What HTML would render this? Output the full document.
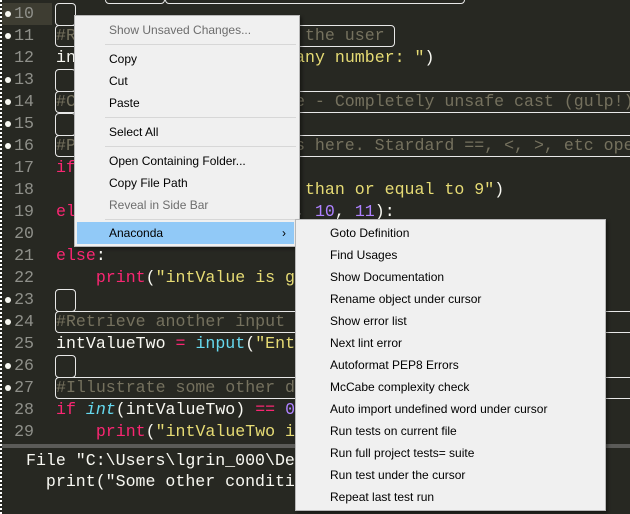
<!DOCTYPE html>
<html><head><meta charset="utf-8"><style>
*{margin:0;padding:0;box-sizing:border-box}
body{width:630px;height:514px;overflow:hidden;background:#272822;position:relative;font-family:"Liberation Mono",monospace}
.ln{position:absolute;left:0;width:34px;text-align:right;color:#8f908a;font-size:16.6px;line-height:22px;height:22px}
.dot{position:absolute;left:5px;width:6px;height:6px;border-radius:3px;background:#f8f8f2}
.code{position:absolute;left:56px;font-size:16.6px;line-height:22px;height:22px;color:#f8f8f2;white-space:pre;max-width:574px;overflow:hidden}
.c{color:#75715e}.s{color:#e6db74}.k{color:#f92672}.n{color:#ae81ff}.b{color:#66d9ef}.i{color:#66d9ef;font-style:italic}
.box{position:absolute;border:1px solid #e8e8e8;border-radius:4px}
.menu{position:absolute;background:#f0f0f0;border:1px solid #b8b8b8;font-family:"Liberation Sans",sans-serif;font-size:12px;color:#000;box-shadow:2px 2px 3px rgba(0,0,0,.4)}
.mi{position:absolute;left:0;right:0;height:22px;line-height:22px;white-space:nowrap}
.sep{position:absolute;left:30px;right:3px;height:1px;background:#d7d7d7}
.g{color:#6d6d6d}
</style></head><body>
<div style="position:absolute;left:0;top:0;width:2px;height:514px;border-left:2px dotted #fff"></div>
<div style="position:absolute;left:2px;top:3px;width:50px;height:22px;background:#3e3d32"></div>

<div class="ln" style="top:3px">10</div><div class="dot" style="top:11px"></div>
<div class="ln" style="top:25px">11</div><div class="dot" style="top:33px"></div>
<div class="ln" style="top:47px">12</div>
<div class="ln" style="top:69px">13</div><div class="dot" style="top:77px"></div>
<div class="ln" style="top:91px">14</div><div class="dot" style="top:99px"></div>
<div class="ln" style="top:113px">15</div><div class="dot" style="top:121px"></div>
<div class="ln" style="top:135px">16</div><div class="dot" style="top:143px"></div>
<div class="ln" style="top:157px">17</div>
<div class="ln" style="top:179px">18</div>
<div class="ln" style="top:201px">19</div>
<div class="ln" style="top:223px">20</div>
<div class="ln" style="top:245px">21</div>
<div class="ln" style="top:267px">22</div>
<div class="ln" style="top:289px">23</div><div class="dot" style="top:297px"></div>
<div class="ln" style="top:311px">24</div><div class="dot" style="top:319px"></div>
<div class="ln" style="top:333px">25</div>
<div class="ln" style="top:355px">26</div><div class="dot" style="top:363px"></div>
<div class="ln" style="top:377px">27</div><div class="dot" style="top:385px"></div>
<div class="ln" style="top:399px">28</div>
<div class="ln" style="top:421px">29</div>

<div class="box" style="left:105px;top:-6px;width:60px;height:10px"></div>
<div class="box" style="left:165px;top:-6px;width:300px;height:10px"></div>
<div class="box" style="left:55px;top:3px;width:21px;height:23px"></div>
<div class="box" style="left:55px;top:25px;width:340px;height:22px"></div>
<div class="box" style="left:55px;top:69px;width:21px;height:23px"></div>
<div class="box" style="left:55px;top:91px;width:575px;height:22px;border-right:none;border-radius:4px 0 0 4px"></div>
<div class="box" style="left:55px;top:113px;width:21px;height:23px"></div>
<div class="box" style="left:55px;top:135px;width:575px;height:22px;border-right:none;border-radius:4px 0 0 4px"></div>
<div class="box" style="left:55px;top:289px;width:21px;height:23px"></div>
<div class="box" style="left:55px;top:311px;width:575px;height:22px;border-right:none;border-radius:4px 0 0 4px"></div>
<div class="box" style="left:55px;top:355px;width:21px;height:23px"></div>
<div class="box" style="left:55px;top:377px;width:575px;height:22px;border-right:none;border-radius:4px 0 0 4px"></div>

<div class="code c" style="top:25px">#Request an integer from the user</div>
<div class="code" style="top:47px">intValue <span class="k">=</span> <span class="b">input</span>(<span class="s">"Enter any number: "</span>)</div>
<div class="code c" style="top:91px">#Convert this input value - Completely unsafe cast (gulp!)</div>
<div class="code c" style="top:135px">#Performs the comparisons here. Stardard ==, &lt;, &gt;, etc operators</div>
<div class="code" style="top:157px"><span class="k">if</span> <span class="i">int</span>(intValue) <span class="k">&lt;=</span> <span class="n">9</span>:</div>
<div class="code" style="top:179px">    <span class="k">print</span>(<span class="s">"intValue less than or equal to 9"</span>)</div>
<div class="code" style="top:201px"><span class="k">elif</span> <span class="i">int</span>(intValue) <span class="k">in</span> (<span class="n">9</span>, <span class="n">10</span>, <span class="n">11</span>):</div>
<div class="code" style="top:245px"><span class="k">else</span>:</div>
<div class="code" style="top:267px">    <span class="k">print</span>(<span class="s">"intValue is greater"</span>)</div>
<div class="code c" style="top:311px">#Retrieve another input from the user to compare and</div>
<div class="code" style="top:333px">intValueTwo <span class="k">=</span> <span class="b">input</span>(<span class="s">"Enter another"</span>)</div>
<div class="code c" style="top:377px">#Illustrate some other decision making here using and</div>
<div class="code" style="top:399px"><span class="k">if</span> <span class="i">int</span>(intValueTwo) <span class="k">==</span> <span class="n">0</span>:</div>
<div class="code" style="top:421px">    <span class="k">print</span>(<span class="s">"intValueTwo is zero"</span>)</div>

<div style="position:absolute;left:2px;top:444px;width:628px;height:4px;background:#5b5b58"></div>
<div class="code" style="left:26px;top:450px">File "C:\Users\lgrin_000\Desktop\test.py"</div>
<div class="code" style="left:26px;top:471px">  print("Some other condition")</div>

<div class="menu" style="left:74px;top:15px;width:226px;height:232px">
<div class="mi g" style="top:3px;padding-left:34px">Show Unsaved Changes...</div>
<div class="sep" style="top:28px"></div>
<div class="mi" style="top:32px;padding-left:34px">Copy</div>
<div class="mi" style="top:54px;padding-left:34px">Cut</div>
<div class="mi" style="top:76px;padding-left:34px">Paste</div>
<div class="sep" style="top:101px"></div>
<div class="mi" style="top:105px;padding-left:34px">Select All</div>
<div class="sep" style="top:130px"></div>
<div class="mi" style="top:134px;padding-left:34px">Open Containing Folder...</div>
<div class="mi" style="top:156px;padding-left:34px">Copy File Path</div>
<div class="mi g" style="top:178px;padding-left:34px">Reveal in Side Bar</div>
<div class="sep" style="top:203px"></div>
<div class="mi" style="top:206px;left:2px;right:5px;background:#91c9f7;padding-left:32px">Anaconda<span style="position:absolute;right:8px">›</span></div>
</div>

<div class="menu" style="left:295px;top:219px;width:311px;height:292px">
<div class="mi" style="top:2px;padding-left:34px">Goto Definition</div>
<div class="mi" style="top:24px;padding-left:34px">Find Usages</div>
<div class="mi" style="top:46px;padding-left:34px">Show Documentation</div>
<div class="mi" style="top:68px;padding-left:34px">Rename object under cursor</div>
<div class="mi" style="top:90px;padding-left:34px">Show error list</div>
<div class="mi" style="top:112px;padding-left:34px">Next lint error</div>
<div class="mi" style="top:134px;padding-left:34px">Autoformat PEP8 Errors</div>
<div class="mi" style="top:156px;padding-left:34px">McCabe complexity check</div>
<div class="mi" style="top:178px;padding-left:34px">Auto import undefined word under cursor</div>
<div class="mi" style="top:200px;padding-left:34px">Run tests on current file</div>
<div class="mi" style="top:222px;padding-left:34px">Run full project tests= suite</div>
<div class="mi" style="top:244px;padding-left:34px">Run test under the cursor</div>
<div class="mi" style="top:266px;padding-left:34px">Repeat last test run</div>
</div>
</body></html>
